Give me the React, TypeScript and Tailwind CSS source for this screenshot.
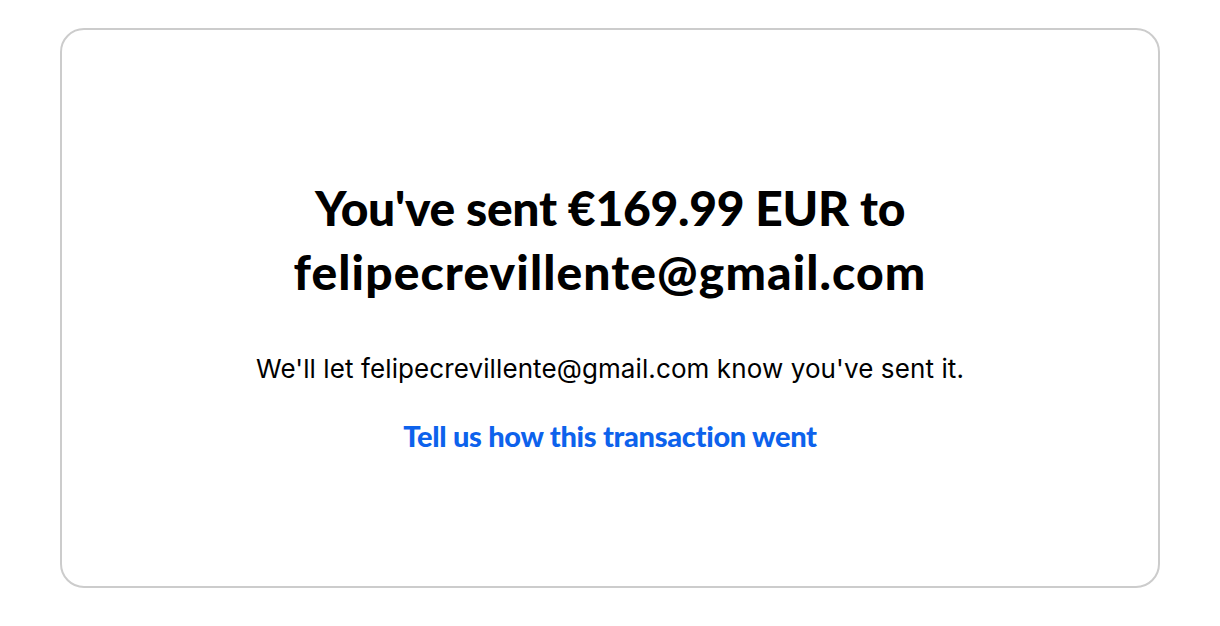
export default function App() {
  return (
    <div className="min-h-[626px] bg-white px-[60px] pt-[28px]">
      <div className="flex h-[560px] w-[1100px] flex-col items-center rounded-[24px] border-2 border-[#cccccc] pt-[146px]">
        <h1 className="text-center font-['Lato',sans-serif] text-[48px] font-black leading-[64px] tracking-[-0.3px] text-[#000000]">
          You've sent €169.99 EUR to
          <br />
          <span className="tracking-[1.1px]">felipecrevillente@gmail.com</span>
        </h1>
        <p className="mt-[49px] font-['Inter',sans-serif] text-[26px] leading-[32px] tracking-[0.1px] text-black">
          We'll let felipecrevillente@gmail.com know you've sent it.
        </p>
        <a href="#" className="mt-[34px] font-['Lato',sans-serif] text-[29px] font-black leading-[34px] tracking-[-0.3px] text-[#0d62ec]">
          Tell us how this transaction went
        </a>
      </div>
    </div>
  );
}
